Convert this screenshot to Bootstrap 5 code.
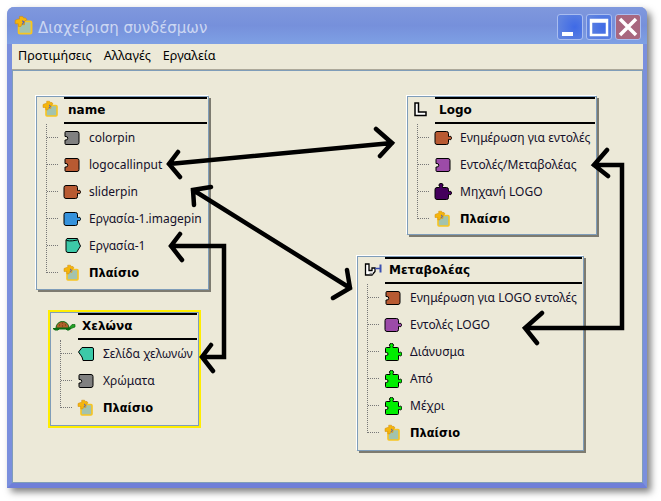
<!DOCTYPE html>
<html lang="el">
<head>
<meta charset="UTF-8" />
<title>Διαχείριση συνδέσμων</title>
<link rel="stylesheet" href="https://cdn.jsdelivr.net/npm/bootstrap@5.3.0/dist/css/bootstrap.min.css" />
<style>
  html, body { height: 501px; overflow: hidden; background: #fff; }
  body { font-family: "DejaVu Sans", sans-serif; padding: 7px 14px 13px 7px; }
  .xp-window {
    width: 640px; height: 481px;
    background: #ece9d8;
    border: solid #7a8fdd; border-width: 0 4px 5px 5px;
    border-bottom-color: #6f7fd8;
    border-radius: 7px 7px 0 0;
    box-shadow: 4px 4px 7px rgba(0,0,0,.5);
  }
  .xp-title {
    height: 37px; margin: 0 -4px 0 -5px; padding: 0 6px 0 7px;
    background: linear-gradient(#7f98dd 0, #7690db 50%, #7ea0e4 100%);
    border-radius: 7px 7px 0 0;
    color: #ccd7f2; font-size: 15px; gap: 3px;
  }
  .xp-title-text { padding-top: 6px; }
  .xp-btns { gap: 3px; padding-top: 2px; }
  .xp-btn {
    width: 26px; height: 26px; border: 1px solid #a9bdf0; border-radius: 3px;
    background: radial-gradient(circle at 70% 50%, #3f6ae6, #5f83e0 80%);
  }
  .xp-btn.xp-close { background: #a8677f; }
  .xp-menu { height: 24px; padding-left: 6px; gap: 12px; font-size: 12.6px; color: #000; font-family: "Noto Sans", sans-serif; }
  .xp-menu span { line-height: 23px; }
  .xp-canvas {
    width: 631px; height: 414px;
    border: 1px solid #7f9db9;
    box-shadow: 0 -1px 0 #aca899;
    margin-top: 2px;
  }
  .node {
    border: 1px solid #7f9db9;
    box-shadow: -1px -1px 0 #fff, 2px 2px 0 #7d7b70;
    font-size: 12px; color: #14102a;
    font-family: "Noto Sans", sans-serif;
  }
  #nodeName { left: 23px; top: 25px; width: 173px; height: 194px; }
  #nodeLogo { left: 394px; top: 25px; width: 190px; height: 139px; }
  #nodeVar { left: 344px; top: 185px; width: 227px; height: 195px; }
  #nodeTurtle { left: 37px; top: 241px; width: 149px; height: 114px; outline: 2px solid #ffee00; box-shadow: none; }
  .node-head { height: 27px; }
  .node-head-icon { width: 27px; padding: 2px 0 0 5px; }
  .node-title {
    margin-right: 1px; padding-left: 4px; line-height: 23px;
    border-top: 2px solid #000; border-bottom: 2px solid #000;
    font-weight: 700; color: #000;
    font-family: "DejaVu Sans", sans-serif;
    font-size: 12px;
  }
  .node-tree { position: relative; padding: 0; }
  .node-tree::before {
    content: ""; position: absolute; left: 9px; top: 0; bottom: 13px;
    border-left: 1px dotted #777;
  }
  .node-tree li { position: relative; height: 27px; padding-left: 26px; }
  .node-tree li::before {
    content: ""; position: absolute; left: 10px; top: 13px; width: 11px;
    border-top: 1px dotted #777;
  }
  .node-tree svg { width: 18px; height: 18px; flex: none; margin-right: 8px; stroke: #000; stroke-width: 1; }
  .node-tree .frame-row { font-family: "DejaVu Sans", sans-serif; font-weight: 700; color: #000; font-size: 11.4px; }
  .node-tree .frame-row span { padding-top: 2px; }
  .pin-grey { fill: #808080; }
  .pin-rust { fill: #b85a32; }
  .pin-blue { fill: #3592dc; }
  .pin-teal { fill: #3cc9a8; }
  .pin-purple { fill: #9c4ba8; }
  .pin-dark { fill: #44005c; }
  .pin-green { fill: #00ee00; }
  .arrows { left: 0; top: 0; z-index: 2; }
  .desk-bit { z-index: -1; background: #0a4fa8; }
  #deskTop { left: 273px; top: 6px; width: 175px; height: 1px; }
  #deskBottom { left: 404px; top: 488px; width: 44px; height: 3px; }
  #deskLeft { left: 6px; top: 465px; width: 1px; height: 21px; background: #d81818; }
</style>
</head>
<body>
<span class="desk-bit position-absolute" id="deskTop"></span>
<span class="desk-bit position-absolute" id="deskBottom"></span>
<span class="desk-bit position-absolute" id="deskLeft"></span>
<svg width="0" height="0" class="position-absolute">
  <defs>
    <symbol id="socket" viewBox="0 0 18 18"><path d="M3 2.500h11a2 2 0 0 1 2 2v9a2 2 0 0 1-2 2H3a1 1 0 0 1-1-1v-3.500h1a1.500 1.500 0 0 0 0-3.500H2V3.500a1 1 0 0 1 1-1z"/></symbol>
    <symbol id="plug" viewBox="0 0 18 18"><path d="M3 2.500h9.500a2 2 0 0 1 2 2v3h.8a1.700 1.700 0 1 1 0 3h-.8v3a2 2 0 0 1-2 2H3a2 2 0 0 1-2-2v-9a2 2 0 0 1 2-2z"/></symbol>
    <symbol id="engine" viewBox="0 0 18 18"><path d="M3 4.500h2.500v-1a2 2 0 1 1 3 0v1h4a2 2 0 0 1 2 2v2h.8a1.700 1.700 0 1 1 0 3h-.8v3a2 2 0 0 1-2 2H3a2 2 0 0 1-2-2v-8a2 2 0 0 1 2-2z"/></symbol>
    <symbol id="puzzle" viewBox="0 0 18 18"><path d="M2.500 4.500H6v-.9a2 2 0 1 1 3 0v.9h4.500a1 1 0 0 1 1 1v4h.8a1.800 1.800 0 1 1 0 3h-.8v4a1 1 0 0 1-1 1h-11a1 1 0 0 1-1-1v-4h1a1.500 1.500 0 0 0 0-3h-1v-4a1 1 0 0 1 1-1z"/></symbol>
    <symbol id="tab-right" viewBox="0 0 18 18"><path d="M4 1.500h10.500l1.500 4.500 1.500 3-4 6.500H5a2 2 0 0 1-2-2V3z"/><path d="M3.500 3.500c4 1 8 0 11-.5" fill="none"/></symbol>
    <symbol id="tab-left" viewBox="0 0 18 18"><path d="M5 2.500h10a1.500 1.500 0 0 1 1.500 1.500v10a1.500 1.500 0 0 1-1.500 1.500H6L5 12 1.500 7z"/></symbol>
    <symbol id="frame" viewBox="0 0 18 18">
      <rect x="4" y="5.500" width="11" height="10.500" rx="1" fill="#a3c3ae" stroke="#f8c520" stroke-width="1.600"/>
      <path d="M3.500 3.500h1.200V1.200h2.800l.8 1.300H10l1 1.500-2 1.300v3H6.500l-.5 1.500H3.800V7.500H1V4.500z" fill="#f5b50c" stroke="#d08a08" stroke-width=".5"/>
      <path d="M7 5l1.500 1-1.500 2" fill="none" stroke="#4a60c8" stroke-width="1"/>
    </symbol>
  </defs>
</svg>

<div class="xp-window d-flex flex-column">
  <div class="xp-title d-flex align-items-center flex-shrink-0">
    <svg width="21" height="21" style="stroke:none"><use href="#frame"/></svg>
    <span class="xp-title-text flex-grow-1">Διαχείριση συνδέσμων</span>
    <div class="xp-btns d-flex">
      <div class="xp-btn"><svg width="24" height="24" viewBox="0 0 24 24"><rect x="4" y="17" width="11" height="4" fill="#fff"/></svg></div>
      <div class="xp-btn"><svg width="24" height="24" viewBox="0 0 24 24"><path d="M4 5h16v15H4zM4 6.500h16" fill="none" stroke="#fff" stroke-width="2.500"/></svg></div>
      <div class="xp-btn xp-close"><svg width="24" height="24" viewBox="0 0 24 24"><path d="M4 4l16 16M20 4L4 20" stroke="#fff" stroke-width="3.500"/></svg></div>
    </div>
  </div>
  <div class="xp-menu d-flex flex-shrink-0">
    <span>Προτιμήσεις</span><span>Αλλαγές</span><span>Εργαλεία</span>
  </div>
  <div class="xp-canvas position-relative">

    <section class="node position-absolute" id="nodeName">
      <div class="node-head d-flex">
        <div class="node-head-icon"><svg width="18" height="18"><use href="#frame"/></svg></div>
        <div class="node-title flex-grow-1">name</div>
      </div>
      <ul class="node-tree list-unstyled m-0">
        <li class="d-flex align-items-center"><svg class="pin-grey"><use href="#socket"/></svg><span>colorpin</span></li>
        <li class="d-flex align-items-center"><svg class="pin-rust"><use href="#socket"/></svg><span>logocallinput</span></li>
        <li class="d-flex align-items-center"><svg class="pin-rust"><use href="#plug"/></svg><span>sliderpin</span></li>
        <li class="d-flex align-items-center"><svg class="pin-blue"><use href="#plug"/></svg><span>Εργασία-1.imagepin</span></li>
        <li class="d-flex align-items-center"><svg class="pin-teal"><use href="#tab-right"/></svg><span>Εργασία-1</span></li>
        <li class="d-flex align-items-center frame-row"><svg><use href="#frame"/></svg><span>Πλαίσιο</span></li>
      </ul>
    </section>

    <section class="node position-absolute" id="nodeLogo">
      <div class="node-head d-flex">
        <div class="node-head-icon"><svg width="18" height="18" viewBox="0 0 18 18"><path d="M2 3h3.500v9H13v3.500H2z" fill="#fff" stroke="#000" stroke-width="1.500"/></svg></div>
        <div class="node-title flex-grow-1">Logo</div>
      </div>
      <ul class="node-tree list-unstyled m-0">
        <li class="d-flex align-items-center"><svg class="pin-rust"><use href="#plug"/></svg><span>Ενημέρωση για εντολές</span></li>
        <li class="d-flex align-items-center"><svg class="pin-purple"><use href="#socket"/></svg><span>Εντολές/Μεταβολέας</span></li>
        <li class="d-flex align-items-center"><svg class="pin-dark"><use href="#engine"/></svg><span>Μηχανή LOGO</span></li>
        <li class="d-flex align-items-center frame-row"><svg><use href="#frame"/></svg><span>Πλαίσιο</span></li>
      </ul>
    </section>

    <section class="node position-absolute" id="nodeVar">
      <div class="node-head d-flex">
        <div class="node-head-icon"><svg width="20" height="18" viewBox="0 0 20 18"><path d="M2.500 4h3.500v6.500h3V8h3v3.500l-3 3.500H2.500z" fill="#fff" stroke="#000" stroke-width="1.300"/><path d="M6.500 13.500h3.500" stroke="#999" stroke-width="1.500"/><path d="M12 8.500h5" stroke="#3a4fb0" stroke-width="1.500"/><path d="M17.500 4.500v8" stroke="#3a4fb0" stroke-width="2"/></svg></div>
        <div class="node-title flex-grow-1">Μεταβολέας</div>
      </div>
      <ul class="node-tree list-unstyled m-0">
        <li class="d-flex align-items-center"><svg class="pin-rust"><use href="#socket"/></svg><span>Ενημέρωση για LOGO εντολές</span></li>
        <li class="d-flex align-items-center"><svg class="pin-purple"><use href="#plug"/></svg><span>Εντολές LOGO</span></li>
        <li class="d-flex align-items-center"><svg class="pin-green"><use href="#puzzle"/></svg><span>Διάνυσμα</span></li>
        <li class="d-flex align-items-center"><svg class="pin-green"><use href="#puzzle"/></svg><span>Από</span></li>
        <li class="d-flex align-items-center"><svg class="pin-green"><use href="#puzzle"/></svg><span>Μέχρι</span></li>
        <li class="d-flex align-items-center frame-row"><svg><use href="#frame"/></svg><span>Πλαίσιο</span></li>
      </ul>
    </section>

    <section class="node position-absolute" id="nodeTurtle">
      <div class="node-head d-flex">
        <div class="node-head-icon" style="padding-left:1px"><svg width="24" height="16" viewBox="0 0 24 16"><path d="M4 11a6.500 6.500 0 0 1 13 0z" fill="#b0602a" stroke="#0a6a10"/><path d="M7 8h1M10 6h1M13 8h1M10 9h1" stroke="#6a3010" stroke-width="1"/><path d="M1 11.500h18l-2 1.500h-2l-1-1H7l-1 1H3z" fill="#0a7a1a" stroke="#0a6a10"/><path d="M17 11l3-3.500h3v2.500l-4 1.500z" fill="#22a022" stroke="#0a6a10" stroke-width=".7"/></svg></div>
        <div class="node-title flex-grow-1">Χελώνα</div>
      </div>
      <ul class="node-tree list-unstyled m-0">
        <li class="d-flex align-items-center"><svg class="pin-teal"><use href="#tab-left"/></svg><span>Σελίδα χελωνών</span></li>
        <li class="d-flex align-items-center"><svg class="pin-grey"><use href="#socket"/></svg><span>Χρώματα</span></li>
        <li class="d-flex align-items-center frame-row"><svg><use href="#frame"/></svg><span>Πλαίσιο</span></li>
      </ul>
    </section>

    <svg class="arrows position-absolute" width="629" height="412" viewBox="13 71 629 412" fill="none" stroke="#000" stroke-width="4.500" stroke-linecap="round" stroke-linejoin="miter">
      <path d="M169 164L392 143M178 152L169 164L180 177M376 129L392 143L380 156"/>
      <path d="M193 190L350 288M194 205L193 190L211 187M347 270L350 288L333 298"/>
      <path d="M171 246H224V357H202M180 234L171 246L182 260M211 345L202 357L213 371"/>
      <path d="M594 165H622V328H525M607 150L594 165L608 176M542 313L525 328L537 343"/>
    </svg>
  </div>
</div>
</body>
</html>
